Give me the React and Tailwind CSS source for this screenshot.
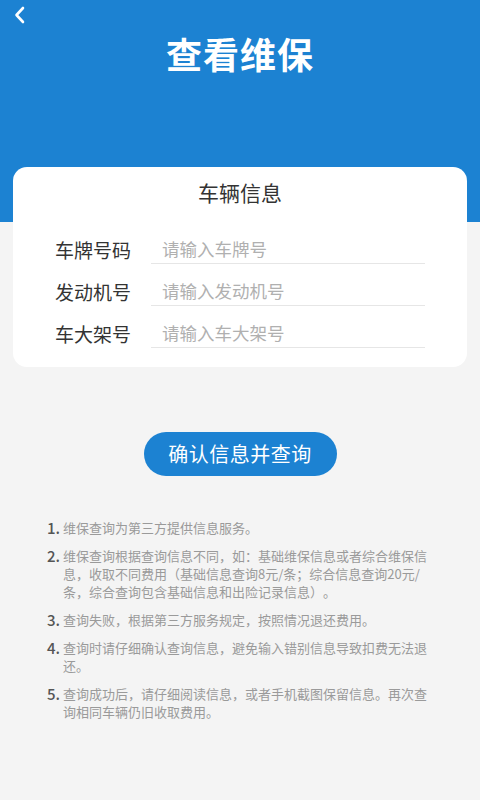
import React from 'react';

const fields = [
  { label: '车牌号码', placeholder: '请输入车牌号' },
  { label: '发动机号', placeholder: '请输入发动机号' },
  { label: '车大架号', placeholder: '请输入车大架号' },
];

const notes = [
  '维保查询为第三方提供信息服务。',
  '维保查询根据查询信息不同，如：基础维保信息或者综合维保信息，收取不同费用（基础信息查询8元/条；综合信息查询20元/条，综合查询包含基础信息和出险记录信息）。',
  '查询失败，根据第三方服务规定，按照情况退还费用。',
  '查询时请仔细确认查询信息，避免输入错别信息导致扣费无法退还。',
  '查询成功后，请仔细阅读信息，或者手机截图保留信息。再次查询相同车辆仍旧收取费用。',
];

export default function App() {
  return (
    <div
      className="w-[480px] min-h-[800px] bg-[#f4f4f4] flex flex-col [text-spacing-trim:space-all]"
      style={{ fontFamily: '"Noto Sans CJK SC", "Noto Sans", sans-serif' }}
    >
      {/* 顶部蓝色区域 */}
      <div className="h-[222px] bg-[#1c82d2] flex flex-col shrink-0">
        <div className="h-[30px] flex items-center pl-[13px]">
          <svg width="14" height="18" viewBox="0 0 14 18" fill="none">
            <path d="M10 2 L3.5 9 L10 16" stroke="white" strokeWidth="2.6" strokeLinecap="round" strokeLinejoin="round" />
          </svg>
        </div>
        <h1 className="text-center text-white font-bold text-[36px] leading-[46px] tracking-[1px]">查看维保</h1>
      </div>

      {/* 车辆信息卡片 */}
      <div className="mx-[13px] -mt-[55px] bg-white rounded-[14px] h-[200px] pt-[11px] flex flex-col">
        <h2 className="text-center text-[#333] text-[21px] leading-[28px]">车辆信息</h2>
        <div className="mt-[16px] flex flex-col">
          {fields.map((f) => (
            <div key={f.label} className="h-[42px] flex items-end pl-[42px]">
              <span className="w-[96px] text-[19px] leading-[26px] text-[#333] pb-[1px]">{f.label}</span>
              <div className="w-[274px] border-b border-[#e6e6e6] pl-[11px] pb-[1px]">
                <span className="text-[17.5px] leading-[26px] text-[#b0b0b0]">{f.placeholder}</span>
              </div>
            </div>
          ))}
        </div>
      </div>

      {/* 查询按钮 */}
      <div className="flex justify-center mt-[65px]">
        <button className="w-[193px] h-[44px] rounded-full bg-[#1c82d2] text-white text-[20px] tracking-[0.5px]">
          确认信息并查询
        </button>
      </div>

      {/* 说明 */}
      <ol className="mt-[43px] pl-[47px] pr-[50px] flex flex-col gap-[10px]">
        {notes.map((n, i) => (
          <li key={i} className="flex">
            <span className="w-[16px] shrink-0 text-[15px] leading-[18px] text-[#555] font-medium">{i + 1}.</span>
            <span className="flex-1 text-[13px] leading-[18px] text-[#9a9a9a]">{n}</span>
          </li>
        ))}
      </ol>
    </div>
  );
}
